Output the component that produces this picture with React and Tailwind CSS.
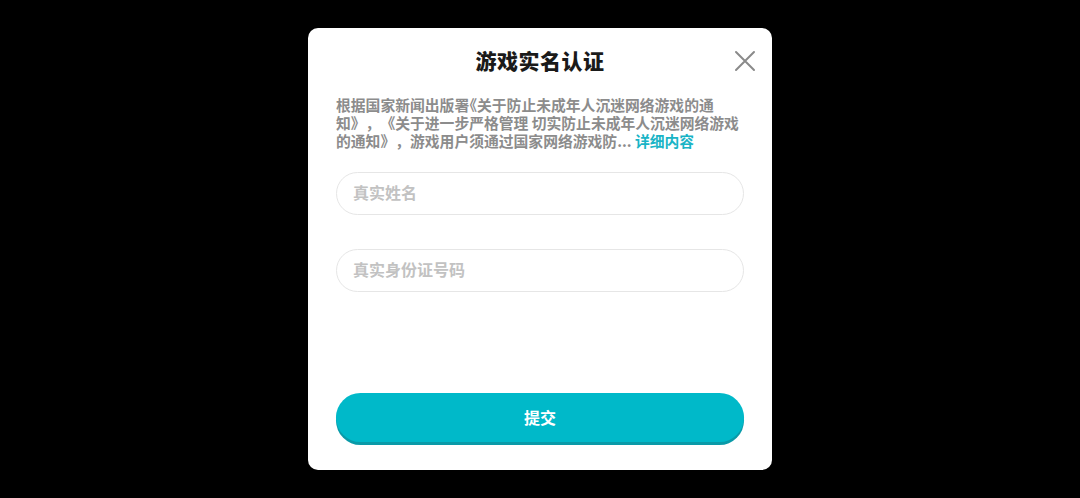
export default function App() {
    return (
        <div
            className="w-full h-[498px] bg-black flex items-center justify-center"
            style={{ fontFamily: '"Noto Sans CJK SC", "Noto Sans", sans-serif' }}
        >
            <div className="relative w-[464px] h-[442px] bg-white rounded-[10px] px-7 pb-[28px] flex flex-col">

                {/* HEADER */}
                <div className="h-[66px] flex items-center justify-center">
                    <h1 className="text-[21px] font-black text-[#1a1a1a] tracking-[0.5px]">
                        游戏实名认证
                    </h1>
                </div>

                <button className="absolute right-[16px] top-[22px] w-[22px] h-[22px] flex items-center justify-center">
                    <svg viewBox="0 0 22 22" className="w-[22px] h-[22px]">
                        <path d="M2 2 L20 20 M20 2 L2 20" stroke="#8a8a8a" strokeWidth="2" strokeLinecap="round" fill="none" />
                    </svg>
                </button>

                {/* NOTICE */}
                <p className="mt-[2px] text-[14.8px] leading-[18px] font-bold text-[#8c8c8c] [text-spacing-trim:space-all]">
                    根据国家新闻出版署<span className="ml-[-7px]">《</span>关于防止未成年人沉迷网络游戏的通<br />
                    知》，《关于进一步严格管理 切实防止未成年人沉迷网络游戏<br />
                    的通知》，游戏用户须通过国家网络游戏防...{" "}
                    <span className="text-[#19b4c6]">详细内容</span>
                </p>

                {/* INPUTS */}
                <div className="mt-[22px] h-[43px] rounded-full border border-[#e6e6e6] flex items-center px-4 pb-[3px]">
                    <span className="text-[16px] font-bold text-[#c2c2c2]">真实姓名</span>
                </div>
                <div className="mt-[34px] h-[43px] rounded-full border border-[#e6e6e6] flex items-center px-4 pb-[3px]">
                    <span className="text-[16px] font-bold text-[#c2c2c2]">真实身份证号码</span>
                </div>

                {/* SUBMIT */}
                <button className="mt-auto h-[49px] rounded-full bg-[#00b9c9] shadow-[0_3px_0_#0a9aa8] flex items-center justify-center pb-[2px]">
                    <span className="text-[16px] font-bold text-white">提交</span>
                </button>

            </div>
        </div>
    );
}
